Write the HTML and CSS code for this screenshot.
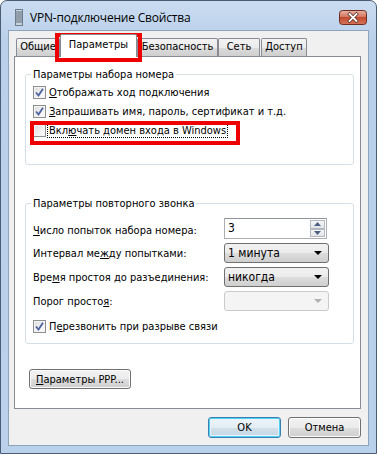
FILE: index.html
```html
<!DOCTYPE html>
<html lang="ru">
<head>
    <meta charset="UTF-8">
    <title>VPN-подключение Свойства</title>
    <link rel="stylesheet" href="styles.css">
</head>
<body>
    <div class="window">
        <div class="titlebar">
            <svg class="app-icon" width="8" height="17" viewBox="0 0 8 17">
                <rect x="0.5" y="0.5" width="7" height="16" fill="#c9d3dd" stroke="#6d7b8a"/>
                <path d="M1 3h6M1 5h6M1 7h6M1 9h6M1 11h6M1 13h6" stroke="#5a6878" stroke-width="1"/>
            </svg>
            <span class="title">VPN-подключение Свойства</span>
            <div class="close">
                <svg width="28" height="15" viewBox="0 0 28 15">
                    <defs>
                        <linearGradient id="cg" x1="0" y1="0" x2="0" y2="1">
                            <stop offset="0" stop-color="#e9b4a6"/>
                            <stop offset="0.45" stop-color="#d47860"/>
                            <stop offset="0.5" stop-color="#c24a30"/>
                            <stop offset="1" stop-color="#d8765a"/>
                        </linearGradient>
                    </defs>
                    <rect x="0.5" y="0.5" width="27" height="14" rx="3" fill="url(#cg)" stroke="#6e2b1f"/>
                    <path d="M10.5 4l7 7M17.5 4l-7 7" stroke="#5a2a22" stroke-width="3.2" stroke-linecap="square"/>
                    <path d="M10.5 4l7 7M17.5 4l-7 7" stroke="#ffffff" stroke-width="1.8" stroke-linecap="square"/>
                </svg>
            </div>
        </div>

        <div class="client">
            <div class="tabs">
                <div class="tab tab-general">Общие</div>
                <div class="tab tab-active">Параметры</div>
                <div class="tab tab-security">Безопасность</div>
                <div class="tab tab-net">Сеть</div>
                <div class="tab tab-access">Доступ</div>
            </div>

            <div class="panel">
                <fieldset class="group group-dial">
                    <legend>Параметры набора номера</legend>
                    <div class="check-row">
                        <span class="chk checked"><svg width="9" height="9" viewBox="0 0 9 9"><path d="M1 4.5l2.5 3L8 0.8" fill="none" stroke="#4d62a0" stroke-width="1.8"/></svg></span>
                        <span><u>О</u>тображать ход подключения</span>
                    </div>
                    <div class="check-row">
                        <span class="chk checked"><svg width="9" height="9" viewBox="0 0 9 9"><path d="M1 4.5l2.5 3L8 0.8" fill="none" stroke="#4d62a0" stroke-width="1.8"/></svg></span>
                        <span><u>З</u>апрашивать имя, пароль, сертификат и т.д.</span>
                    </div>
                    <div class="check-row">
                        <span class="chk"></span>
                        <span class="focus">Вкл<u>ю</u>чать домен входа в Windows</span>
                    </div>
                </fieldset>

                <fieldset class="group group-redial">
                    <legend>Параметры повторного звонка</legend>
                    <div class="form-row first">
                        <span class="label label-spin"><u>Ч</u>исло попыток набора номера:</span>
                        <div class="spin">
                            <span class="spin-value">3</span>
                            <span class="spin-buttons">
                                <span class="spin-btn"><svg width="7" height="4" viewBox="0 0 7 4"><path d="M0 4L3.5 0L7 4z" fill="#4d6185"/></svg></span>
                                <span class="spin-btn"><svg width="7" height="4" viewBox="0 0 7 4"><path d="M0 0L3.5 4L7 0z" fill="#4d6185"/></svg></span>
                            </span>
                        </div>
                    </div>
                    <div class="form-row">
                        <span class="label">Интервал ме<u>ж</u>ду попытками:</span>
                        <div class="select"><span>1 минута</span><span class="arrow"></span></div>
                    </div>
                    <div class="form-row">
                        <span class="label">Вре<u>м</u>я простоя до разъединения:</span>
                        <div class="select"><span>никогда</span><span class="arrow"></span></div>
                    </div>
                    <div class="form-row">
                        <span class="label">Порог просто<u>я</u>:</span>
                        <div class="select disabled"><span></span><span class="arrow"></span></div>
                    </div>
                    <div class="check-row redial">
                        <span class="chk checked"><svg width="9" height="9" viewBox="0 0 9 9"><path d="M1 4.5l2.5 3L8 0.8" fill="none" stroke="#4d62a0" stroke-width="1.8"/></svg></span>
                        <span>П<u>е</u>резвонить при разрыве связи</span>
                    </div>
                </fieldset>

                <button class="btn btn-ppp"><u>П</u>араметры PPP...</button>
            </div>

            <div class="footer">
                <button class="btn btn-default">OK</button>
                <button class="btn">Отмена</button>
            </div>
        </div>

        <!-- красные рамки-выделения поверх окна -->
        <div class="mark mark-tab"></div>
        <div class="mark mark-row"></div>
    </div>
</body>
</html>
```

FILE: styles.css
```css
* {
    box-sizing: border-box;
}
body {
    margin: 0;
    background: #fff;
    font-family: "DejaVu Sans Condensed", "Liberation Sans", sans-serif;
    font-size: 11px;
    color: #000;
}
.window {
    position: relative;
    width: 377px;
    height: 454px;
    display: flex;
    flex-direction: column;
    padding: 0 7px 7px 7px;
    border: 1px solid #4b5d72;
    border-radius: 7px 7px 0 0;
    background: linear-gradient(#cadcf1, #b9d0ea 40px, #b9d1ea);
}
.titlebar {
    height: 29px;
    display: flex;
    align-items: center;
    padding-top: 3px;
}
.app-icon {
    margin-left: 7px;
}
.title {
    margin-left: 7px;
    font-family: "Segoe UI", "Open Sans", sans-serif;
    font-size: 12px;
    letter-spacing: -0.2px;
    color: #000;
}
.close {
    margin-left: auto;
    margin-right: 2px;
    height: 15px;
}
.client {
    flex: 1;
    display: flex;
    flex-direction: column;
    background: #f0f0f0;
    border: 1px solid #8fa3ba;
}
.tabs {
    display: flex;
    align-items: flex-end;
    height: 22px;
    margin-top: 3px;
    padding-left: 7px;
}
.tab {
    height: 18px;
    line-height: 16px;
    text-align: center;
    border: 1px solid #898c95;
    border-bottom: none;
    border-radius: 2px 2px 0 0;
    background: linear-gradient(#f3f3f3, #ebebeb 50%, #dcdcdc 51%, #cfcfcf);
}
.tab-general { width: 44px; }
.tab-security { width: 81px; }
.tab-net { width: 42px; }
.tab-access { width: 46px; margin-left: 1px; }
.tab-active {
    position: relative;
    z-index: 1;
    width: 77px;
    height: 23px;
    margin-bottom: -1px;
    line-height: 20px;
    background: #fff;
}
.panel {
    width: 347px;
    height: 353px;
    margin-left: 5px;
    border: 1px solid #898c95;
    background: #fff;
}
.group {
    width: 329px;
    margin: 0 0 0 10px;
    padding: 0 0 0 7px;
    border: 1px solid #d5dfe5;
    border-radius: 3px;
}
.group legend {
    padding: 0 2px;
    line-height: 13px;
    margin-left: -2px;
}
.group-dial {
    margin-top: 11px;
    padding-top: 2px;
    padding-bottom: 24px;
}
.group-redial {
    margin-top: 32px;
    padding-bottom: 8px;
}
.check-row {
    display: flex;
    align-items: center;
    height: 19px;
}
.chk {
    width: 13px;
    height: 13px;
    margin-right: 3px;
    display: flex;
    align-items: center;
    justify-content: center;
    border: 1px solid #8e8f8f;
    background: linear-gradient(135deg, #dcdcdc, #f6f6f6 70%, #fff);
    box-shadow: inset 0 0 0 1px #f4f4f4;
}
.focus {
    line-height: 13px;
    outline: 1px dotted #000;
    outline-offset: 0;
    margin-left: -1px;
    padding: 0 1px;
}
.form-row {
    display: flex;
    align-items: center;
    height: 20px;
    margin-top: 4px;
}
.form-row.first {
    height: 21px;
    margin-top: 8px;
}
.label {
    width: 191px;
}
.label-spin {
    padding-top: 4px;
}
.spin {
    width: 103px;
    height: 21px;
    display: flex;
    justify-content: space-between;
    border: 1px solid #abadb3;
    border-top-color: #8f949c;
    background: #fff;
    padding: 1px 1px 1px 3px;
}
.spin-value {
    line-height: 17px;
    font-size: 12px;
}
.spin-buttons {
    display: flex;
    flex-direction: column;
    width: 15px;
}
.spin-btn {
    flex: 1;
    display: flex;
    align-items: center;
    justify-content: center;
    border: 1px solid #b4b8c0;
    background: linear-gradient(#f6f6f6, #e2e4e8);
}
.select {
    width: 105px;
    height: 20px;
    display: flex;
    align-items: center;
    justify-content: space-between;
    padding: 0 6px 0 3px;
    border: 1px solid #707070;
    border-radius: 3px;
    background: linear-gradient(#f2f2f2, #ebebeb 50%, #dddddd 51%, #cfcfcf);
    font-size: 12px;
}
.arrow {
    width: 0;
    height: 0;
    border-left: 4px solid transparent;
    border-right: 4px solid transparent;
    border-top: 4px solid #000;
}
.select.disabled {
    border-color: #c8cacb;
    background: #f4f4f4;
}
.select.disabled .arrow {
    border-top-color: #b0b0b0;
}
.check-row.redial {
    height: 18px;
    margin-top: 6px;
}
.btn {
    height: 21px;
    padding: 0;
    font-family: "DejaVu Sans Condensed", "Liberation Sans", sans-serif;
    font-size: 11px;
    color: #000;
    border: 1px solid #707070;
    border-radius: 3px;
    background: linear-gradient(#f2f2f2, #ebebeb 50%, #dddddd 51%, #cfcfcf);
    box-shadow: inset 0 0 0 1px #fcfcfc;
}
.btn-ppp {
    width: 102px;
    height: 20px;
    margin: 25px 0 0 14px;
}
.footer {
    display: flex;
    justify-content: flex-end;
    gap: 7px;
    margin-top: 8px;
    padding-right: 7px;
}
.footer .btn {
    width: 73px;
}
.btn-default {
    border-color: #3c7fb1;
    box-shadow: inset 0 0 0 1px #4fd0f5, inset 0 0 0 2px #e8f3f9;
    background: linear-gradient(#eef5fa, #e3edf4 50%, #d2e0ea 51%, #c5d7e4);
}
.mark {
    position: absolute;
    border: 4px solid #ee0000;
}
.mark-tab {
    left: 54px;
    top: 32px;
    width: 87px;
    height: 29px;
}
.mark-row {
    left: 29px;
    top: 120px;
    width: 210px;
    height: 24px;
}
```
